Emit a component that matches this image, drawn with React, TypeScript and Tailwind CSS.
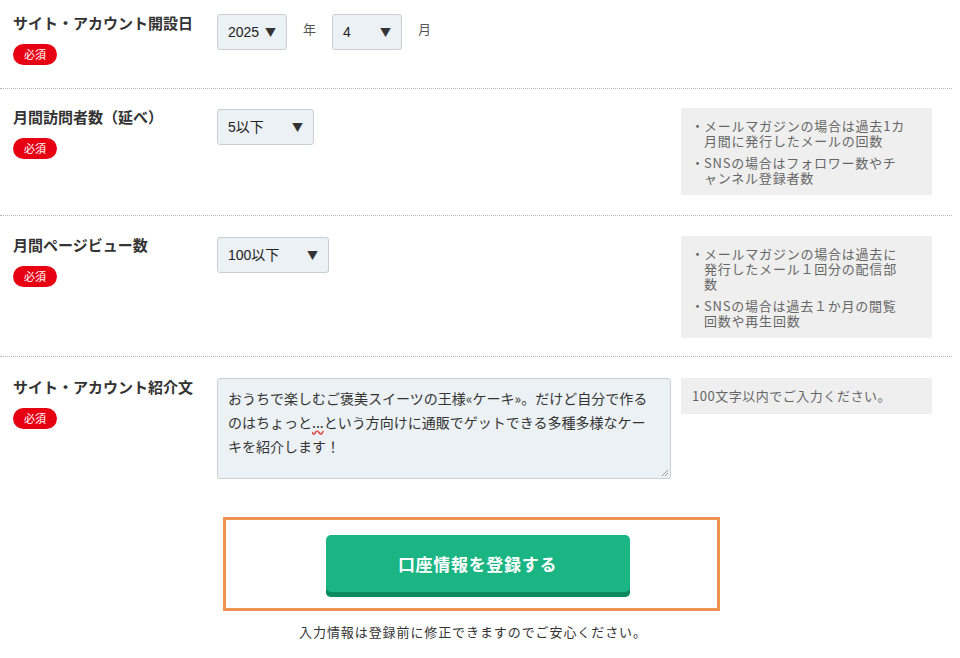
import React from 'react';

const jp = { fontFamily: '"Noto Sans CJK JP", "Noto Sans", sans-serif' };

const Badge = () => (
  <span className="inline-flex items-center justify-center w-[44px] h-[21px] rounded-full bg-[#e60012] text-white text-[11px] leading-none">
    必須
  </span>
);

const Select: React.FC<{ value: string; width: number }> = ({ value, width }) => (
  <div
    className="flex items-center justify-between h-[36px] pl-[10px] pr-[10px] bg-[#ebf1f4] border border-[#c9d0d4] rounded-[3px] text-[14px] text-[#222]"
    style={{ width }}
  >
    <span style={{ fontFamily: '"Liberation Sans", "Noto Sans CJK JP", sans-serif' }}>{value}</span>
    <span className="text-[11px] text-[#333]">▼</span>
  </div>
);

const Note: React.FC<{ items: React.ReactNode[] }> = ({ items }) => (
  <div className="bg-[#efefef] pl-[10px] pr-[12px] pt-[10px] pb-[10px] text-[13px] leading-[15px] tracking-[0.06em] text-[#666] flex flex-col gap-[7px]">
    {items.map((it, i) => (
      <div key={i} className="flex">
        <span className="w-[13px] shrink-0 text-center">・</span>
        <span>{it}</span>
      </div>
    ))}
  </div>
);

const Label: React.FC<{ text: string }> = ({ text }) => (
  <div className="flex flex-col gap-[8px] pl-[13px]">
    <div className="text-[15px] font-bold text-[#333] leading-[18px]">{text}</div>
    <div>
      <Badge />
    </div>
  </div>
);

export default function App() {
  return (
    <div className="w-[960px] h-[658px] bg-white overflow-hidden" style={jp}>
      <div className="w-[952px]">
        {/* Row 1 */}
        <div className="grid grid-cols-[217px_464px_251px] pt-[14px] h-[89px] border-b border-dotted border-[#b5b5b5]">
          <Label text="サイト・アカウント開設日" />
          <div className="flex items-start gap-[16px]">
            <Select value="2025" width={70} />
            <span className="text-[13px] text-[#555] leading-[30px]">年</span>
            <Select value="4" width={70} />
            <span className="text-[13px] text-[#555] leading-[30px]">月</span>
          </div>
          <div />
        </div>

        {/* Row 2 */}
        <div className="grid grid-cols-[217px_464px_251px] pt-[19px] pb-[20px] border-b border-dotted border-[#b5b5b5]">
          <Label text="月間訪問者数（延べ）" />
          <div className="pt-[1px]">
            <Select value="5以下" width={97} />
          </div>
          <Note
            items={[
              <>メールマガジンの場合は過去1カ<br />月間に発行したメールの回数</>,
              <>SNSの場合はフォロワー数やチ<br />ャンネル登録者数</>,
            ]}
          />
        </div>

        {/* Row 3 */}
        <div className="grid grid-cols-[217px_464px_251px] pt-[20px] pb-[18px] border-b border-dotted border-[#b5b5b5]">
          <Label text="月間ページビュー数" />
          <div className="pt-[1px]">
            <Select value="100以下" width={112} />
          </div>
          <Note
            items={[
              <>メールマガジンの場合は過去に<br />発行したメール１回分の配信部<br />数</>,
              <>SNSの場合は過去１か月の閲覧<br />回数や再生回数</>,
            ]}
          />
        </div>

        {/* Row 4 */}
        <div className="grid grid-cols-[217px_464px_251px] pt-[21px]">
          <Label text="サイト・アカウント紹介文" />
          <div className="pr-[10px]">
            <div className="relative h-[101px] bg-[#ebf1f4] border border-[#c9d0d4] rounded-[3px] px-[10px] pt-[7px] text-[14px] leading-[24px] text-[#333] whitespace-nowrap">
              <div>おうちで楽しむご褒美スイーツの王様«ケーキ»。だけど自分で作る</div>
              <div>
                のはちょっと
                <span className="underline decoration-wavy decoration-[#e53935] underline-offset-2">...</span>
                という方向けに通販でゲットできる多種多様なケー
              </div>
              <div>キを紹介します！</div>
              <svg className="absolute right-[1px] bottom-[1px]" width="9" height="9" viewBox="0 0 9 9">
                <path d="M8 2 L2 8 M8 5 L5 8" stroke="#999" strokeWidth="1" />
              </svg>
            </div>
          </div>
          <div>
            <div className="bg-[#efefef] h-[36px] pl-[11px] flex items-center text-[13px] text-[#666] tracking-[0.04em]">
              100文字以内でご入力ください。
            </div>
          </div>
        </div>

        {/* Submit */}
        <div className="flex flex-col items-center pt-[38px]">
          <div className="w-[497px] h-[94px] border-[3px] border-[#ef9350] flex items-start justify-center pt-[15px] ml-[-10px]">
            <button className="ml-[13px] w-[304px] h-[62px] rounded-[5px] bg-[#1bb584] shadow-[inset_0_-5px_0_#0c8a5f] text-white text-[17px] font-bold tracking-[0.04em] pb-[4px]">
              口座情報を登録する
            </button>
          </div>
          <div className="mt-[11px] text-[13px] text-[#333] tracking-[0.07em] ml-[-6px]">
            入力情報は登録前に修正できますのでご安心ください。
          </div>
        </div>
      </div>
    </div>
  );
}
